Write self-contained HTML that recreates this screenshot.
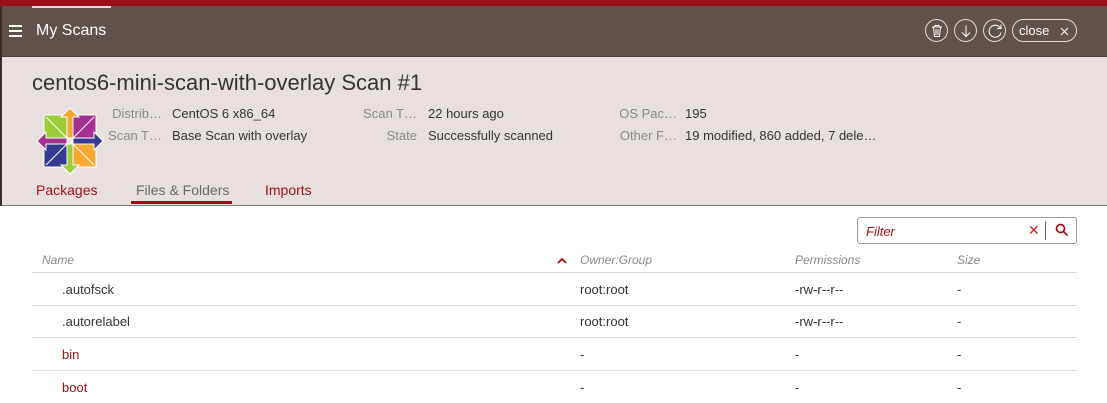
<!DOCTYPE html><html><head><style>
body{margin:0;width:1107px;height:403px;overflow:hidden;font-family:"Liberation Sans",sans-serif;background:#fff;position:relative}
.red{position:absolute;left:0;top:0;width:1107px;height:6px;background:#9b0f16}
.wstrip{position:absolute;left:32px;top:6px;width:79px;height:2px;background:#ddd}
.hdr{position:absolute;left:0;top:6px;width:1107px;height:50px;background:#5f514c;border-bottom:1px solid #4a3f3b}
.edge{position:absolute;left:0;top:6px;width:2px;height:200px;background:#3a2d2a}
.hdr .t{position:absolute;left:36px;top:16px;color:#fff;font-size:16px}
.ham{position:absolute;left:9px;top:19px;width:13px}
.ham i{display:block;height:2px;background:#fff;margin-bottom:3px}
.ic{position:absolute;top:13px;width:23px;height:23px;border:1px solid #ddd;border-radius:50%;box-sizing:border-box}
.ic svg{position:absolute;left:1px;top:1px}
.cl{position:absolute;left:1012px;top:13px;width:65px;height:23px;border:1px solid #ddd;border-radius:12px;box-sizing:border-box;color:#fff;font-size:13px;padding:3px 0 0 6px}
.sub{position:absolute;left:2px;top:57px;width:1105px;height:148px;background:#e7e0de;border-bottom:1px solid #777}
h1{position:absolute;left:32px;top:70px;margin:0;font-weight:normal;font-size:22px;color:#333}
.k,.v{position:absolute;font-size:13px}
.k{color:#888;text-align:right}
.v{color:#333}
.tab{position:absolute;top:182px;font-size:14px;color:#9b0f16}
.th{position:absolute;top:253px;font-size:12px;color:#888;font-style:italic}
.row{position:absolute;left:32px;width:1045px;height:32px;border-top:1px solid #ddd}
.c{position:absolute;font-size:13px;color:#333}
</style></head><body>
<div class="hdr"><div class="ham"><i></i><i></i><i></i></div><div class="t">My Scans</div>
<div class="ic" style="left:925px"><svg width="20" height="20"><path d="M5 6h10M8 6V4.5h4V6M6.5 6.5l1 9h5l1-9M9 8v6M11 8v6" stroke="#fff" fill="none"/></svg></div>
<div class="ic" style="left:954px"><svg width="20" height="20"><path d="M10 4.5v11M6 11.5l4 4 4-4" stroke="#fff" fill="none"/></svg></div>
<div class="ic" style="left:983px"><svg width="20" height="20"><path d="M15.5 7.5A6 6 0 1 0 16 11.5M16 3.5v4h-4" stroke="#fff" fill="none"/></svg></div>
<div class="cl">close <svg style="position:absolute;right:7px;top:7px" width="9" height="9"><path d="M1 1l7 7M8 1l-7 7" stroke="#fff"/></svg></div>
</div>
<div class="red"></div><div class="wstrip"></div><div class="edge"></div>
<div class="sub"></div>
<h1>centos6-mini-scan-with-overlay Scan #1</h1>
<svg style="position:absolute;left:35px;top:106px" width="70" height="70" viewBox="0 0 70 70">
<rect x="9" y="9" width="25" height="25" fill="#9ccb3b" stroke="#fff"/><rect x="36" y="9" width="25" height="25" fill="#a5308f" stroke="#fff"/><rect x="9" y="36" width="25" height="25" fill="#343a90" stroke="#fff"/><rect x="36" y="36" width="25" height="25" fill="#f5a933" stroke="#fff"/>
<polygon points="35,2 44,11 38,11 38,32 32,32 32,11 26,11" fill="#f5a933" stroke="#fff"/>
<polygon points="68,35 59,44 59,38 38,38 38,32 59,32 59,26" fill="#343a90" stroke="#fff"/>
<polygon points="35,68 26,59 32,59 32,38 38,38 38,59 44,59" fill="#9ccb3b" stroke="#fff"/>
<polygon points="2,35 11,26 11,32 32,32 32,38 11,38 11,44" fill="#a5308f" stroke="#fff"/>
<path d="M11 11L33 33M59 11L37 33M11 59L33 37M59 59L37 37" stroke="#fff"/>
</svg>
<div class="k" style="left:100px;width:62px;top:106px">Distrib…</div><div class="v" style="left:172px;top:106px">CentOS 6 x86_64</div>
<div class="k" style="left:100px;width:62px;top:128px">Scan T…</div><div class="v" style="left:172px;top:128px">Base Scan with overlay</div>
<div class="k" style="left:340px;width:77px;top:106px">Scan T…</div><div class="v" style="left:428px;top:106px">22 hours ago</div>
<div class="k" style="left:340px;width:77px;top:128px">State</div><div class="v" style="left:428px;top:128px">Successfully scanned</div>
<div class="k" style="left:600px;width:77px;top:106px">OS Pac…</div><div class="v" style="left:685px;top:106px">195</div>
<div class="k" style="left:600px;width:77px;top:128px">Other F…</div><div class="v" style="left:685px;top:128px">19 modified, 860 added, 7 dele…</div>
<div class="tab" style="left:36px">Packages</div>
<div class="tab" style="left:136px;color:#666">Files &amp; Folders</div>
<div style="position:absolute;left:131px;top:201px;width:101px;height:3px;background:#9b0f16"></div>
<div class="tab" style="left:265px">Imports</div>
<div style="position:absolute;left:857px;top:217px;width:220px;height:27px;border:1px solid #999;border-radius:3px;box-sizing:border-box"><span style="position:absolute;left:8px;top:6px;font-size:13px;font-style:italic;color:#9b0f16">Filter</span><span style="position:absolute;left:170px;top:4px;color:#c22;font-size:14px">✕</span><div style="position:absolute;left:187px;top:3px;width:1px;height:19px;background:#666"></div><svg style="position:absolute;left:197px;top:5px" width="14" height="14"><circle cx="5.5" cy="5.5" r="4" stroke="#9b0f16" stroke-width="1.7" fill="none"/><path d="M8.5 8.5l4 4" stroke="#9b0f16" stroke-width="1.8"/></svg></div>
<div class="th" style="left:42px">Name</div><svg style="position:absolute;left:557px;top:257px" width="10" height="7"><path d="M1 6l4-4 4 4" stroke="#9b0f16" stroke-width="1.8" fill="none"/></svg>
<div class="th" style="left:580px">Owner:Group</div><div class="th" style="left:795px">Permissions</div><div class="th" style="left:957px">Size</div>
<div class="row" style="top:272px"></div><div class="row" style="top:305px"></div><div class="row" style="top:337px"></div><div class="row" style="top:370px"></div>
<div class="c" style="left:62px;top:282px">.autofsck</div><div class="c" style="left:580px;top:282px">root:root</div><div class="c" style="left:795px;top:282px">-rw-r--r--</div><div class="c" style="left:957px;top:282px">-</div>
<div class="c" style="left:62px;top:314px">.autorelabel</div><div class="c" style="left:580px;top:314px">root:root</div><div class="c" style="left:795px;top:314px">-rw-r--r--</div><div class="c" style="left:957px;top:314px">-</div>
<div class="c" style="left:62px;top:347px;color:#9b0f16">bin</div><div class="c" style="left:580px;top:347px">-</div><div class="c" style="left:795px;top:347px">-</div><div class="c" style="left:957px;top:347px">-</div>
<div class="c" style="left:62px;top:380px;color:#9b0f16">boot</div><div class="c" style="left:580px;top:380px">-</div><div class="c" style="left:795px;top:380px">-</div><div class="c" style="left:957px;top:380px">-</div>
</body></html>
